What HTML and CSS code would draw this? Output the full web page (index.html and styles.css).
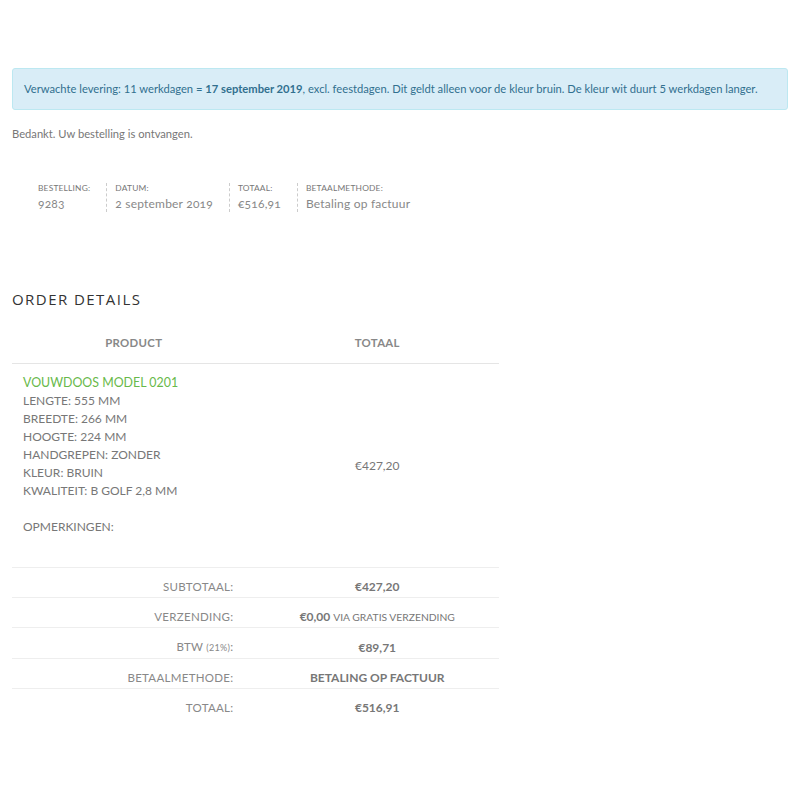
FILE: index.html
```html
<!DOCTYPE html>
<html>
<head>
<meta charset="utf-8">
<link rel="stylesheet" href="styles.css">
</head>
<body>
<div class="page">
  <div class="notice">Verwachte levering: 11 werkdagen = <strong>17 september 2019</strong>, excl. feestdagen. Dit geldt alleen voor de kleur bruin. De kleur wit duurt 5 werkdagen langer.</div>
  <p class="thanks">Bedankt. Uw bestelling is ontvangen.</p>
  <ul class="overview">
    <li class="ov-item"><span class="ov-label">Bestelling:</span><span class="ov-value">9283</span></li>
    <li class="ov-item"><span class="ov-label">Datum:</span><span class="ov-value">2 september 2019</span></li>
    <li class="ov-item"><span class="ov-label">Totaal:</span><span class="ov-value">€516,91</span></li>
    <li class="ov-item"><span class="ov-label">Betaalmethode:</span><span class="ov-value">Betaling op factuur</span></li>
  </ul>
  <h2 class="title">Order details</h2>
  <table class="details">
    <thead>
      <tr><th>Product</th><th>Totaal</th></tr>
    </thead>
    <tbody>
      <tr class="item">
        <td class="product">
          <a class="product-name" href="#">Vouwdoos model 0201</a><br>
          Lengte: 555 mm<br>
          Breedte: 266 mm<br>
          Hoogte: 224 mm<br>
          Handgrepen: zonder<br>
          Kleur: bruin<br>
          Kwaliteit: B golf 2,8 mm<br>
          <br>
          Opmerkingen:
        </td>
        <td class="price">€427,20</td>
      </tr>
    </tbody>
    <tfoot>
      <tr><th>Subtotaal:</th><td><b>€427,20</b></td></tr>
      <tr><th>Verzending:</th><td><b>€0,00</b> <small>via Gratis verzending</small></td></tr>
      <tr><th>BTW <span class="pct">(21%)</span>:</th><td><b>€89,71</b></td></tr>
      <tr><th>Betaalmethode:</th><td><b>Betaling op factuur</b></td></tr>
      <tr><th>Totaal:</th><td><b>€516,91</b></td></tr>
    </tfoot>
  </table>
</div>
</body>
</html>
```

FILE: styles.css
```css
html, body {
  margin: 0;
  padding: 0;
  background: #fff;
}
body {
  font-family: Lato, "Open Sans", "Liberation Sans", sans-serif;
  font-size: 11.2px;
  color: #777;
}
.page {
  padding: 68px 12px 40px 12px;
}
.notice {
  background: #d9edf7;
  border: 1px solid #bce8f1;
  border-radius: 3px;
  color: #31708f;
  padding: 12px 11px;
  line-height: 16px;
  font-size: 11.2px;
  white-space: nowrap;
}
.notice strong {
  font-weight: 700;
}
.thanks {
  margin: 16px 0 0 0;
  line-height: 16px;
  color: #777;
}
.overview {
  list-style: none;
  display: flex;
  margin: 41px 0 0 0;
  padding: 0 0 0 26px;
}
.ov-item {
  display: flex;
  flex-direction: column;
  padding: 0 16px 0 8px;
  border-left: 1px dashed #ccc;
}
.ov-item:first-child {
  border-left: none;
  padding-left: 0;
}
.ov-label {
  font-size: 8.4px;
  text-transform: uppercase;
  line-height: 10px;
  color: #777;
  letter-spacing: 0.2px;
}
.ov-value {
  font-size: 12px;
  line-height: 16px;
  margin-top: 3px;
  color: #888;
  letter-spacing: 0.2px;
  font-variant-numeric: oldstyle-nums;
}
.title {
  margin: 77px 0 0 0;
  font-family: "Open Sans", Lato, sans-serif;
  font-weight: 400;
  font-size: 15px;
  line-height: 20px;
  letter-spacing: 1.45px;
  text-transform: uppercase;
  color: #333;
}
.details {
  width: 487px;
  border-collapse: collapse;
  margin-top: 20px;
  text-transform: uppercase;
  font-size: 11.4px;
  color: #777;
}
.details thead th {
  width: 50%;
  font-weight: 700;
  text-align: center;
  padding: 6px 0 12px 0;
  line-height: 16px;
  letter-spacing: 0.3px;
  border-bottom: 1px solid #e5e5e5;
  color: #888;
}
.item td {
  vertical-align: middle;
  border-bottom: 1px solid #eee;
}
.product {
  padding: 10px 11px 31px 11px;
  font-size: 12px;
  line-height: 18px;
  color: #777;
  text-align: left;
}
.product-name {
  color: #68b94a;
  text-decoration: none;
  font-size: 12.4px;
}
.price {
  padding: 11px;
  text-align: center;
  font-size: 12px;
  color: #777;
}
.details tfoot th {
  text-align: right;
  font-weight: 400;
  font-size: 11.5px;
  padding: 12px 22px 3px 0;
  line-height: 14px;
  color: #888;
  letter-spacing: 0.3px;
  border-bottom: 1px solid #eee;
}
.details tfoot td {
  text-align: center;
  padding: 12px 0 3px 0;
  line-height: 14px;
  border-bottom: 1px solid #eee;
  color: #777;
}
.details tfoot tr:last-child th,
.details tfoot tr:last-child td {
  border-bottom: none;
}
.details tfoot b {
  font-weight: 700;
  font-size: 12px;
}
.details tfoot small {
  font-size: 10.3px;
}
.pct {
  font-size: 9px;
}
```
